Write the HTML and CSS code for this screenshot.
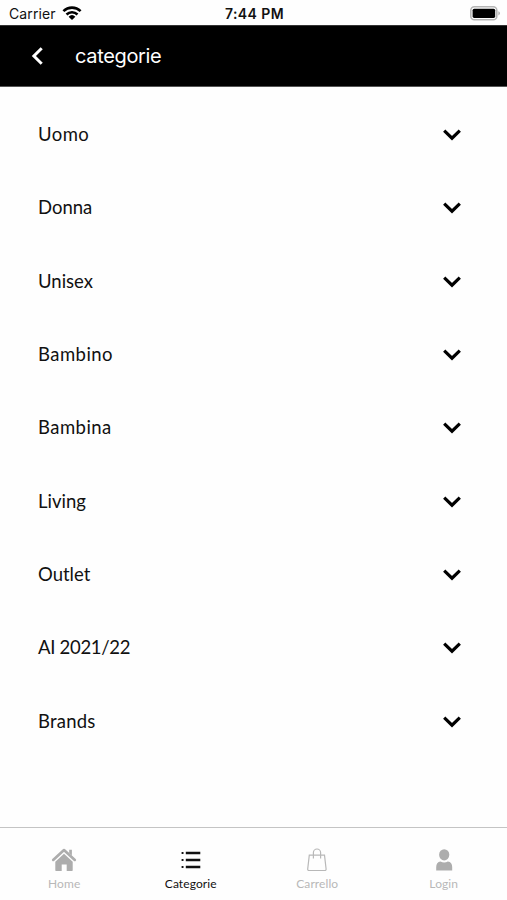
FILE: index.html
```html
<!doctype html>
<html lang="it">
<head>
    <meta charset="utf-8">
    <title>Categorie</title>
    <link rel="stylesheet" href="styles.css">
</head>
<body>
<div class="app">
    <!-- Status bar -->
    <div class="status">
        <div class="status-left">
            <span class="carrier">Carrier</span>
            <svg class="wifi" width="20" height="14" viewBox="0 0 20 14">
                <path d="M1.4 5.1a12.4 12.4 0 0 1 17.2 0M4.500 8.500a8 8 0 0 1 11 0" fill="none" stroke="#000" stroke-width="2.600"/>
                <path d="M6.600 10.700a5 5 0 0 1 6.800 0L10 14z"/>
            </svg>
        </div>
        <span class="time">7:44 PM</span>
        <svg class="battery" width="30" height="15" viewBox="0 0 30 15">
            <rect x=".8" y=".8" width="26" height="13" rx="3.6" fill="#fff" stroke="#b5b5b5" stroke-width="1.6"/>
            <rect x="2.6" y="2.7" width="22.6" height="9.2" rx="1.6"/>
            <path d="M28.3 5.2q1.7.6 1.7 2.1t-1.7 2.1z" fill="#b5b5b5"/>
        </svg>
    </div>

    <!-- Header -->
    <header class="header">
        <svg class="back" width="14" height="20" viewBox="0 0 14 20">
            <path d="M11.7 2.2L3.9 10l7.8 7.8" fill="none" stroke="#fff" stroke-width="3"/>
        </svg>
        <h1 class="title">categorie</h1>
    </header>

    <svg class="defs" width="0" height="0">
        <symbol id="chevron" viewBox="0 0 20 14">
            <path d="M2.200 3.700L10 11.200l7.800-7.500" fill="none" stroke="#000" stroke-width="3.200"/>
        </symbol>
    </svg>

    <!-- Category list -->
    <ul class="list">
        <li class="row"><span class="wide">Uomo</span><svg class="chevron"><use href="#chevron"/></svg></li>
        <li class="row"><span>Donna</span><svg class="chevron"><use href="#chevron"/></svg></li>
        <li class="row"><span>Unisex</span><svg class="chevron"><use href="#chevron"/></svg></li>
        <li class="row"><span class="wide">Bambino</span><svg class="chevron"><use href="#chevron"/></svg></li>
        <li class="row"><span class="wide">Bambina</span><svg class="chevron"><use href="#chevron"/></svg></li>
        <li class="row"><span>Living</span><svg class="chevron"><use href="#chevron"/></svg></li>
        <li class="row"><span>Outlet</span><svg class="chevron"><use href="#chevron"/></svg></li>
        <li class="row"><span class="season">AI 2021/22</span><svg class="chevron"><use href="#chevron"/></svg></li>
        <li class="row"><span class="brands">Brands</span><svg class="chevron"><use href="#chevron"/></svg></li>
    </ul>

    <!-- Bottom tabs -->
    <nav class="tabs">
        <div class="tab">
            <svg width="26" height="26" viewBox="0 0 26 26">
                <path d="M2.200 12.900L13 3.100l10.800 9.800" fill="none" stroke="#adadad" stroke-width="2.700" stroke-linecap="round" stroke-linejoin="round"/>
                <path d="M18.200 2.700h2.700v5.800l-2.700-2.400z" fill="#adadad"/>
                <path d="M13 6.800l8.700 7.900v8.200q0 1.200-1.200 1.200h-4.800v-6.600h-5v6.600H5.500q-1.200 0-1.200-1.200v-8.200z" fill="#adadad"/>
            </svg>
            <span class="label">Home</span>
        </div>
        <div class="tab active">
            <svg width="26" height="26" viewBox="0 0 26 26">
                <path d="M7.800 6h14.500M7.800 13h14.500M7.800 20h14.500" stroke="#111" stroke-width="2.300"/>
                <path d="M3.600 6h1.900M3.600 13h1.900M3.600 20h1.900" stroke="#111" stroke-width="2"/>
            </svg>
            <span class="label">Categorie</span>
        </div>
        <div class="tab">
            <svg width="26" height="26" viewBox="0 0 26 26">
                <path d="M5.300 8.200h15.200l1.600 13.800q.1 1.500-1.400 1.500H5.100q-1.500 0-1.400-1.500z" fill="none" stroke="#b8b8b8" stroke-width="1.200"/>
                <path d="M9.400 11.500V5.600a3.600 3.600 0 0 1 7.200 0v5.900" fill="none" stroke="#b8b8b8" stroke-width="1.200"/>
            </svg>
            <span class="label">Carrello</span>
        </div>
        <div class="tab">
            <svg width="26" height="26" viewBox="0 0 26 26">
                <ellipse cx="13.200" cy="7.800" rx="5.100" ry="5.600" fill="#adadad"/>
                <path d="M5.200 23.500v-3.300q0-5.200 4.300-5.800 3.700 2.200 7.400 0 4.300.6 4.300 5.800v3.300z" fill="#adadad"/>
            </svg>
            <span class="label">Login</span>
        </div>
    </nav>
</div>
</body>
</html>
```
FILE: styles.css
```css
* {
    box-sizing: border-box;
}
body {
    margin: 0;
    background-color: #fefefe;
    color: #111;
    font-family: Lato, sans-serif;
}
.app {
    height: 900px;
    display: flex;
    flex-direction: column;
    overflow: hidden;
}
.status {
    display: grid;
    grid-template-columns: 1fr auto 1fr;
    align-items: center;
    height: 25px;
    padding: 2px 7px 0 9px;
    font-family: Inter, sans-serif;
    font-size: 14px;
}
.status-left {
    display: flex;
    align-items: center;
    gap: 6px;
}
.carrier {
    letter-spacing: 0.1px;
}
.wifi {
    margin-top: -2px;
}
.time {
    font-weight: 600;
    letter-spacing: 0.4px;
}
.battery {
    justify-self: end;
    margin-top: -1px;
}
.header {
    display: flex;
    align-items: center;
    height: 62px;
    padding-left: 30px;
    background-color: #000;
    border-top: 1px solid #333;
    border-bottom: 1px solid #555;
    color: #fff;
}
.title {
    margin: 0 0 0 31px;
    font-family: Inter, sans-serif;
    font-size: 20px;
    font-weight: 400;
    letter-spacing: -0.35px;
}
.defs {
    position: absolute;
}
.list {
    flex: 1;
    margin: 0;
    padding: 10.5px 45px 0 38px;
    list-style: none;
    font-size: 18.5px;
}
.row {
    display: flex;
    align-items: center;
    justify-content: space-between;
    height: 73.33px;
}
.wide {
    letter-spacing: 0.45px;
}
.brands {
    letter-spacing: 0.2px;
}
.season {
    letter-spacing: -0.3px;
}
.chevron {
    width: 20px;
    height: 14px;
}
.tabs {
    display: grid;
    grid-template-columns: repeat(4, 1fr);
    height: 73px;
    padding: 19px 0 0 1px;
    border-top: 1px solid #c4c4c4;
}
.tab {
    display: flex;
    flex-direction: column;
    align-items: center;
    color: #b8b8b8;
}
.label {
    margin-top: 4px;
    font-size: 12px;
    line-height: 14px;
    letter-spacing: 0.1px;
}
.active {
    color: #111;
}
```
